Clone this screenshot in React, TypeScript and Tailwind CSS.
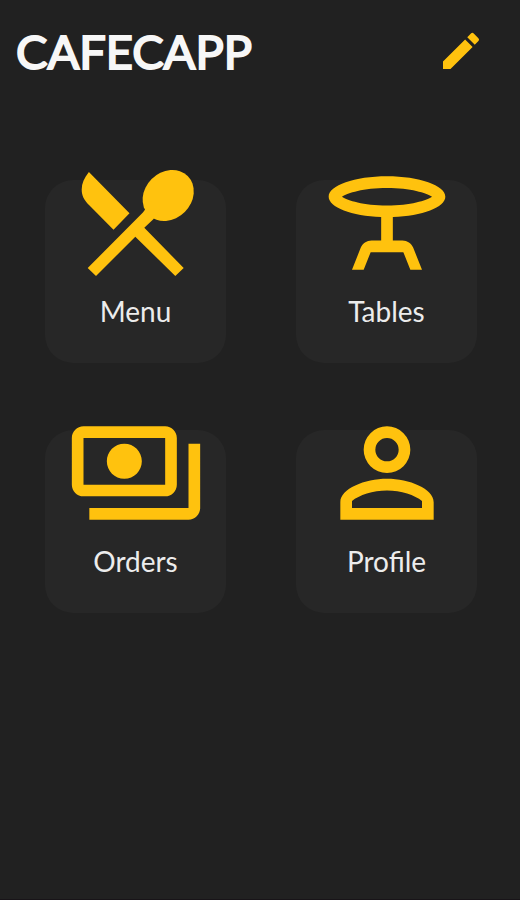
import React from "react";
import { MdEdit, MdOutlinePayments, MdOutlineTableBar } from "react-icons/md";

interface ITileProps {
    label: string;
    icon: React.ReactNode;
}

const CutleryIcon = ({ className }: { className?: string }) => (
    <svg viewBox="0 0 140 140" fill="currentColor" className={className} aria-hidden="true">
        <path d="M22.9 19 63.5 60.3 47.5 76.7 23 52C18 47 15.7 42.5 15.7 36.5c0-6 2.4-11.5 7.2-17.5z" />
        <ellipse cx="102.2" cy="42.5" rx="27.6" ry="23.4" transform="rotate(-45 102.2 42.5)" />
        <path d="M76.9 59.6 21.7 115l8.3 8 39.3-39.3L109.3 123l8.4-8-39.4-40.2 9-8.5 6-10-8-8z" />
    </svg>
);

const PersonIcon = ({ className }: { className?: string }) => (
    <svg viewBox="0 0 24 24" fill="currentColor" className={className} aria-hidden="true">
        <path
            fillRule="evenodd"
            d="M12 4a4 4 0 1 1 0 8 4 4 0 0 1 0-8zm0 2a2 2 0 1 0 0 4 2 2 0 0 0 0-4zM4 20v-3c0-2.3 4.2-4 8-4s8 1.7 8 4v3zm2-2h12v-1.2c-1.2-1-3.6-1.8-6-1.8s-4.8.8-6 1.8z"
        />
    </svg>
);

const tiles: ITileProps[] = [
    { label: "Menu", icon: <CutleryIcon className="size-[140px]" /> },
    { label: "Tables", icon: <MdOutlineTableBar className="size-[140px]" /> },
    { label: "Orders", icon: <MdOutlinePayments className="size-[140px]" /> },
    { label: "Profile", icon: <PersonIcon className="size-[140px]" /> },
];

const Tile = ({ label, icon }: ITileProps) => {
  return (
    <button type="button" className="flex flex-col items-center justify-end rounded-[28px] bg-[#272727] h-[183px] pb-[34px] cursor-pointer">
        <span className="text-[#ffc20e]">{icon}</span>
        <span className="text-[28px] leading-9 text-[#ececec]">{label}</span>
    </button>
  );
};

const App = () => {
  return (
    <div className="min-h-screen w-full bg-[#212121] border-b border-[#181418] font-['Lato',sans-serif]">
        <header className="flex flex-row items-center justify-between pl-4 pr-[35px] pt-5">
            <h1 className="text-[47px] leading-[62px] font-normal text-[#f7f7f7] [-webkit-text-stroke:2px_#f7f7f7]">CAFECAPP</h1>
            <button type="button" aria-label="Edit" className="text-[#ffc20e] cursor-pointer">
                <MdEdit className="size-12" />
            </button>
        </header>
        <main className="grid grid-cols-2 gap-x-[70px] gap-y-[67px] pl-[45px] pr-[43px] pt-[98px]">
            {tiles.map((tile) => (
                <Tile key={tile.label} label={tile.label} icon={tile.icon} />
            ))}
        </main>
    </div>
  );
};

export default App;
